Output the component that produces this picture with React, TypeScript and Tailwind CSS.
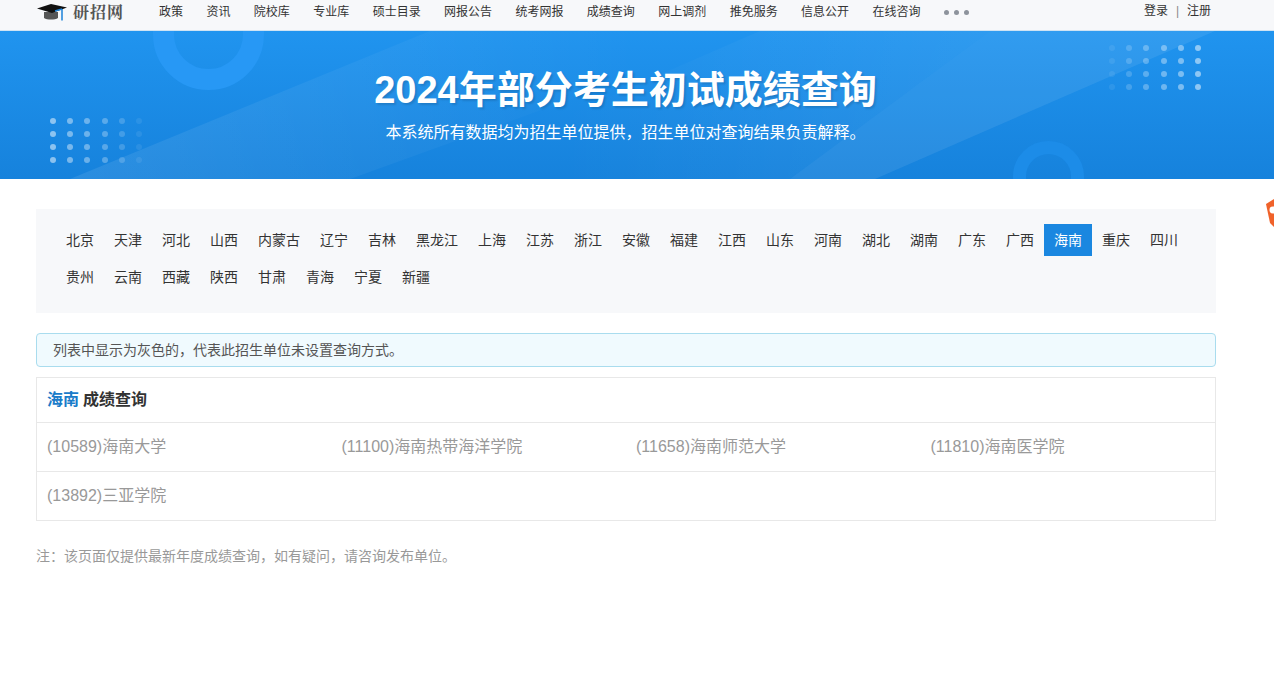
const navItems = ['政策', '资讯', '院校库', '专业库', '硕士目录', '网报公告', '统考网报', '成绩查询', '网上调剂', '推免服务', '信息公开', '在线咨询']
const provinces = ['北京', '天津', '河北', '山西', '内蒙古', '辽宁', '吉林', '黑龙江', '上海', '江苏', '浙江', '安徽', '福建', '江西', '山东', '河南', '湖北', '湖南', '广东', '广西', '海南', '重庆', '四川', '贵州', '云南', '西藏', '陕西', '甘肃', '青海', '宁夏', '新疆']
const schools = ['(10589)海南大学', '(11100)海南热带海洋学院', '(11658)海南师范大学', '(11810)海南医学院', '(13892)三亚学院']

function CapLogo() {
  return (
    <svg width="30" height="19" viewBox="0 0 30 19">
      <path d="M7 9v6c3 2 11 2 14 0V9z" fill="#555" />
      <path d="M0 5.500 14 1l16 3.500L15 10z" fill="#111" />
      <path d="M25 6v11.500" stroke="#1b82d8" strokeWidth="1.500" fill="none" />
      <path d="M18 8l7-2" stroke="#1b82d8" strokeWidth="1.500" fill="none" />
    </svg>
  )
}

function DotGrid({ reverse }: { reverse?: boolean }) {
  const cols = [0.5, 0.42, 0.36, 0.28, 0.18, 0.08]
  const ordered = reverse ? [...cols].reverse() : cols
  return (
    <div className="grid grid-cols-[repeat(6,6px)] gap-x-[11.200px] gap-y-[7px]">
      {[0, 1, 2, 3].map((row) =>
        ordered.map((o, i) => (
          <span key={`${row}-${i}`} className="h-1.5 w-1.5 rounded-full bg-white" style={{ opacity: o }} />
        )),
      )}
    </div>
  )
}

function Banner() {
  return (
    <div className="relative h-[148px] overflow-hidden bg-gradient-to-b from-[#2094ef] to-[#1682dc]">
      <svg className="absolute inset-0" width="1274" height="148" viewBox="0 0 1274 148">
        <defs>
          <linearGradient id="bandLeft" gradientUnits="userSpaceOnUse" x1="70" y1="0" x2="640" y2="0">
            <stop offset="0" stopColor="#fff" stopOpacity="0.09" />
            <stop offset="1" stopColor="#fff" stopOpacity="0" />
          </linearGradient>
          <linearGradient id="bandWash" gradientUnits="userSpaceOnUse" x1="560" y1="0" x2="1000" y2="0">
            <stop offset="0" stopColor="#fff" stopOpacity="0" />
            <stop offset="1" stopColor="#fff" stopOpacity="0.07" />
          </linearGradient>
        </defs>
        <path d="M70 148 430 0H760L350 148z" fill="url(#bandLeft)" />
        <path d="M420 148 760 0H990L790 148z" fill="url(#bandWash)" />
        <path d="M790 148H875L1215 0H990z" fill="#fff" opacity="0.08" />
      </svg>
      <div className="absolute top-[-55px] left-[153px] h-[114px] w-[111px] rounded-full border-[21px] border-[#2798f5]" />
      <div className="absolute top-[110px] left-[1013px] h-[71px] w-[71px] rounded-full border-[13px] border-[#1c8ce8]" />
      <div className="absolute top-[87px] left-[50px]"><DotGrid /></div>
      <div className="absolute top-[14px] left-[1109px]"><DotGrid reverse /></div>
      <div className="relative flex flex-col items-center pr-[23px] text-white">
        <h1 className="mt-[33px] text-[38px] leading-[52px] font-bold [text-shadow:2px_2px_2px_rgba(0,0,0,0.12)]">2024年部分考生初试成绩查询</h1>
        <p className="mt-[5px] text-base leading-6">本系统所有数据均为招生单位提供，招生单位对查询结果负责解释。</p>
      </div>
    </div>
  )
}

export default function App() {
  return (
    <div className="relative h-[680px] w-[1274px] overflow-hidden bg-white font-['Liberation_Sans','Noto_Sans_CJK_SC',sans-serif] text-[#333]">
      <header className="flex h-[31px] border-b border-[#cfe3f3] bg-[#f7f8fa] pl-[37px]">
        <div className="flex h-[24px] w-[122px] items-center">
          <CapLogo />
          <span className="ml-[6px] font-['Noto_Serif_CJK_SC',serif] text-base leading-5 font-bold tracking-[1px] text-[#555]">研招网</span>
        </div>
        <nav className="flex h-[24px] items-center gap-[23.400px] text-xs text-[#333]">
          {navItems.map((item) => (
            <a key={item}>{item}</a>
          ))}
          <span className="flex gap-[5px]">
            <i className="h-[5px] w-[5px] rounded-full bg-[#8d939c]" />
            <i className="h-[5px] w-[5px] rounded-full bg-[#8d939c]" />
            <i className="h-[5px] w-[5px] rounded-full bg-[#8d939c]" />
          </span>
        </nav>
        <div className="ml-[175px] flex h-[21px] items-center text-xs">
          <a>登录</a>
          <span className="mx-2 text-[#888]">|</span>
          <a>注册</a>
        </div>
      </header>

      <Banner />

      <main className="mx-[36px] w-[1180px] pt-[30px]">
        <div className="flex h-[104px] flex-wrap content-start gap-y-[5px] bg-[#f7f8fa] px-[20px] pt-[15px]">
          {provinces.map((p) => (
            <a
              key={p}
              className={`flex h-[32px] items-center px-[10px] text-sm ${p === '海南' ? 'bg-[#1a87e0] text-white' : 'text-[#333]'}`}
            >
              {p}
            </a>
          ))}
        </div>

        <div className="mt-[20px] flex h-[34px] items-center rounded border border-[#a9dcee] bg-[#f0fafe] pl-[16px] text-sm text-[#555]">
          列表中显示为灰色的，代表此招生单位未设置查询方式。
        </div>

        <div className="mt-[10px] border border-[#e8e8e8]">
          <h3 className="flex h-[45px] items-center border-b border-[#e8e8e8] pl-[10px] text-base font-bold text-[#333]">
            <span className="mr-1 text-[#1a7cc9]">海南</span>成绩查询
          </h3>
          <div className="grid grid-cols-4 text-base text-[#999]">
            {schools.map((s, i) => (
              <a key={s} className={`flex items-center pl-[10px] ${i === 4 ? 'col-span-4 h-[49px] border-t border-[#e8e8e8]' : 'h-[48px]'}`}>
                {s}
              </a>
            ))}
          </div>
        </div>

        <p className="mt-[25px] text-sm leading-5 text-[#999]">注：该页面仅提供最新年度成绩查询，如有疑问，请咨询发布单位。</p>
      </main>

      <svg className="absolute top-[199px] left-[1266px]" width="8" height="28" viewBox="0 0 8 28">
        <path d="M0 5 8 0v28l-4-4z" fill="#f0622a" />
        <circle cx="7" cy="11" r="3.500" fill="#fff" />
      </svg>
    </div>
  )
}
